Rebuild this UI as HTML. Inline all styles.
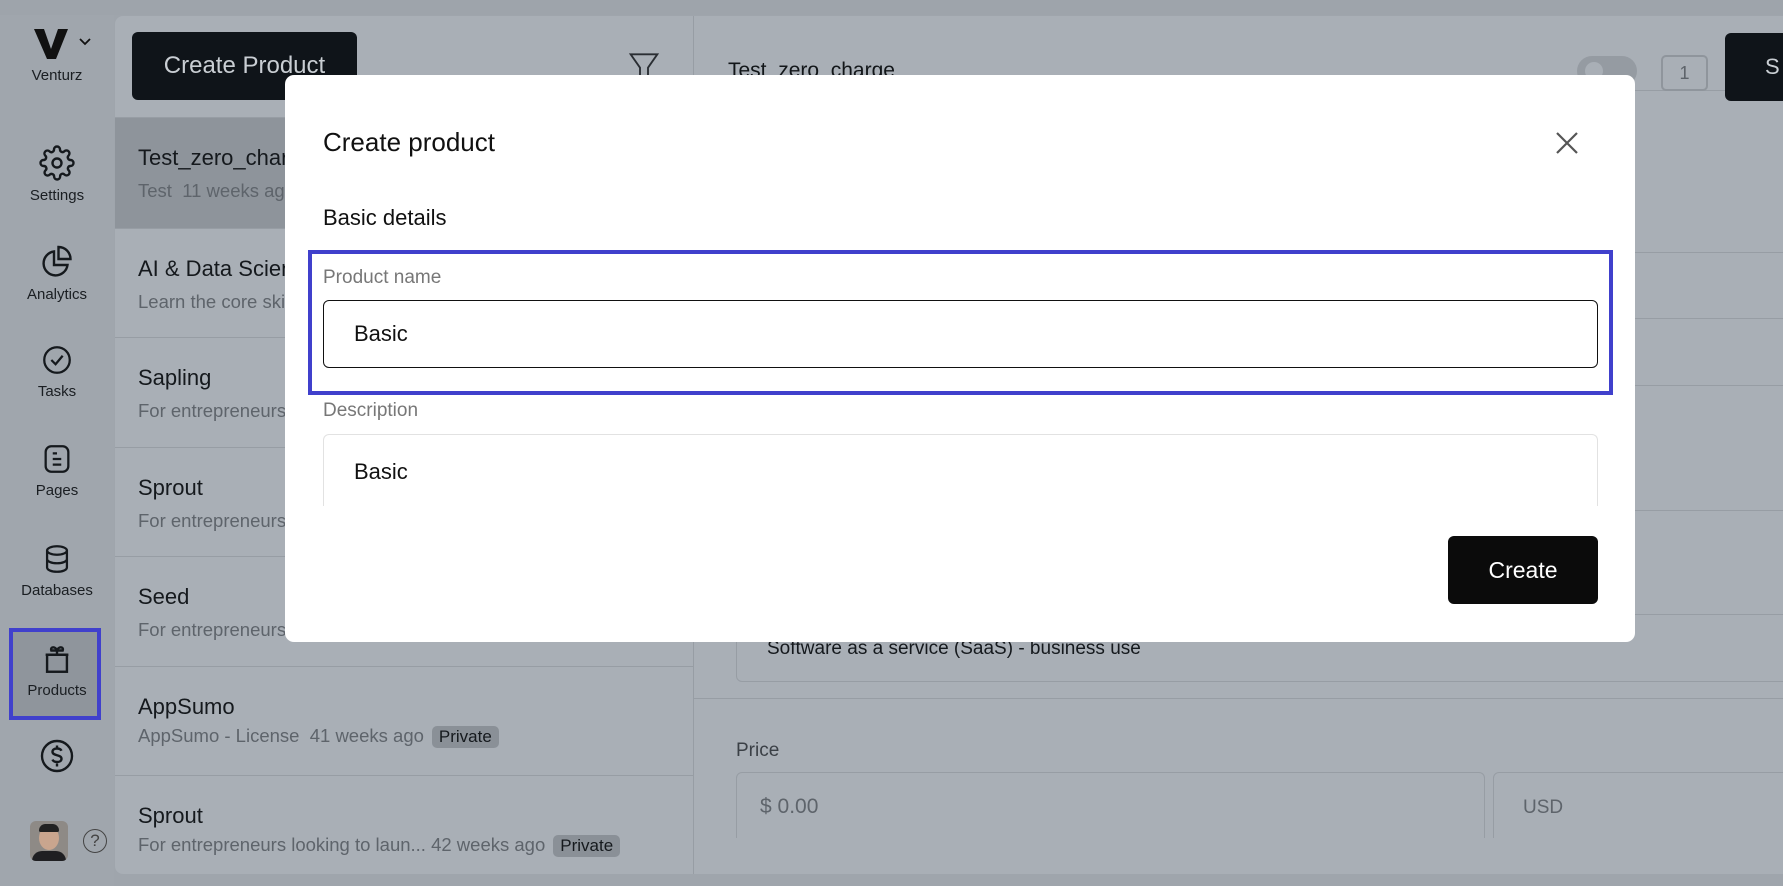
<!DOCTYPE html>
<html><head><meta charset="utf-8"><style>
*{box-sizing:border-box;margin:0;padding:0}
body{width:1783px;height:886px;overflow:hidden;background:#9fa5ac;font-family:"Liberation Sans",sans-serif;color:#121619;position:relative}
.abs{position:absolute}
.side{left:0;top:0;width:114px;height:886px;background:#a0a6ad}
.nav{position:absolute;left:0;width:114px;text-align:center;font-size:15px;color:#1a1e22}
.nav svg{display:block;margin:0 auto 6px}
.list{left:115px;top:16px;width:578px;height:858px;background:#a9afb6;border-radius:8px 0 0 8px}
.item{position:absolute;left:0;width:578px;border-top:1px solid #979da4}
.item .t{position:absolute;left:23px;font-size:22px;color:#15191d}
.item .s{position:absolute;left:23px;font-size:18.5px;color:#5e646b;white-space:nowrap}
.tag{display:inline-block;background:#8a9097;color:#15191d;border-radius:5px;padding:1px 7px;margin-left:8px;font-size:17px}
.right{left:693px;top:16px;width:1090px;height:858px;background:#a9afb6;border-left:1px solid #979da4}
.hl{border-top:1px solid #979da4;position:absolute;left:0;width:1090px}
.modal{left:285px;top:75px;width:1350px;height:567px;background:#fff;border-radius:9px}
</style></head><body>
<div class="abs side"></div>
<div class="abs" style="left:0;top:0;width:1783px;height:15px;background:#9ea4ab"></div>
<svg class="abs" style="left:34px;top:29px" width="34" height="30" viewBox="0 0 34 30"><path d="M0 0h10l7 20 7-20h10L22 30h-9z" fill="#111"/></svg>
<svg class="abs" style="left:79px;top:38px" width="12" height="8" viewBox="0 0 12 8" fill="none" stroke="#111" stroke-width="1.8"><path d="M1 1l5 5 5-5"/></svg>
<div class="nav" style="top:67px">Venturz</div>
<div class="nav" style="top:145px"><svg width="36" height="36" viewBox="0 0 24 24" fill="none" stroke="#15191d" stroke-width="1.6"><circle cx="12" cy="12" r="3"/><path d="M19.4 15a1.65 1.65 0 0 0 .33 1.82l.06.06a2 2 0 1 1-2.83 2.830l-.06-.06a1.65 1.65 0 0 0-2.82 1.17V21a2 2 0 1 1-4 0v-.09A1.65 1.65 0 0 0 9 19.4a1.65 1.650 0 0 0-1.82.33l-.06.06a2 2 0 1 1-2.83-2.83l.06-.06A1.65 1.65 0 0 0 3.17 14H3a2 2 0 1 1 0-4h.09A1.65 1.65 0 0 0 4.6 9a1.65 1.65 0 0 0-.33-1.82l-.06-.06a2 2 0 1 1 2.830-2.83l.06.06A1.65 1.65 0 0 0 9 4.6 1.65 1.65 0 0 0 10 3.09V3a2 2 0 1 1 4 0v.09a1.65 1.65 0 0 0 1 1.51 1.65 1.65 0 0 0 1.82-.33l.06-.06a2 2 0 1 1 2.83 2.83l-.06.06A1.65 1.65 0 0 0 19.4 9a1.65 1.65 0 0 0 1.51 1H21a2 2 0 1 1 0 4h-.09a1.65 1.65 0 0 0-1.51 1z"/></svg>Settings</div>
<div class="nav" style="top:244px"><svg width="36" height="36" viewBox="0 0 24 24" fill="none" stroke="#15191d" stroke-width="1.6"><path d="M10 5a8 8 0 1 0 9 9h-9z"/><path d="M13 2a8 8 0 0 1 8 8h-8z"/></svg>Analytics</div>
<div class="nav" style="top:343px"><svg width="34" height="34" viewBox="0 0 24 24" fill="none" stroke="#15191d" stroke-width="1.6"><circle cx="12" cy="12" r="9"/><path d="M8 12l3 3 5-6"/></svg>Tasks</div>
<div class="nav" style="top:442px"><svg width="34" height="34" viewBox="0 0 24 24" fill="none" stroke="#15191d" stroke-width="1.6"><rect x="4" y="3" width="16" height="18" rx="4"/><path d="M9 8h3M9 12h6M9 16h6"/></svg>Pages</div>
<div class="nav" style="top:542px"><svg width="34" height="34" viewBox="0 0 24 24" fill="none" stroke="#15191d" stroke-width="1.6"><ellipse cx="12" cy="6" rx="7" ry="3"/><path d="M5 6v12c0 1.7 3.1 3 7 3s7-1.3 7-3V6M5 12c0 1.7 3.1 3 7 3s7-1.3 7-3"/></svg>Databases</div>
<div class="abs" style="left:9px;top:628px;width:92px;height:92px;border:4px solid #4040cc;background:#8f959c"></div>
<div class="nav" style="top:642px"><svg width="34" height="34" viewBox="0 0 24 24" fill="none" stroke="#15191d" stroke-width="1.7"><rect x="5" y="9" width="14" height="12"/><path d="M4 9h16M12 9V5M12 6c-1-3-5-3-4 0zM12 6c1-3 5-3 4 0z"/></svg>Products</div>
<div class="nav" style="top:738px"><svg width="36" height="36" viewBox="0 0 24 24" fill="none" stroke="#15191d" stroke-width="1.6"><circle cx="12" cy="12" r="10"/><path d="M15 8.5c-.5-1-1.6-1.5-3-1.5-1.700 0-3 .8-3 2.2 0 3 6 1.6 6 4.6 0 1.4-1.3 2.2-3 2.2-1.4 0-2.6-.6-3-1.6M12 5v2M12 17v2"/></svg></div>
<div class="abs" style="left:30px;top:821px;width:38px;height:40px;background:#8e8a86;border-radius:6px;overflow:hidden"><div class="abs" style="left:9px;top:5px;width:20px;height:24px;background:#c9a58e;border-radius:50%"></div><div class="abs" style="left:9px;top:3px;width:20px;height:8px;background:#222;border-radius:8px 8px 2px 2px"></div><div class="abs" style="left:2px;top:30px;width:34px;height:14px;background:#1f1f22;border-radius:10px 10px 0 0"></div></div>
<div class="abs" style="left:83px;top:829px;width:24px;height:24px;border:1.5px solid #444;border-radius:50%;font-size:17px;text-align:center;line-height:21px;color:#444">?</div>

<div class="abs list">
  <div class="abs" style="left:17px;top:16px;width:225px;height:68px;background:#0f1419;border-radius:6px;color:#c9ced3;font-size:24px;text-align:center;line-height:68px">Create Product</div>
  <svg class="abs" style="left:513px;top:35px" width="32" height="36" viewBox="0 0 24 26" fill="none" stroke="#2a2e33" stroke-width="1.4"><path d="M2 2h20l-7 10v11l-6-3v-8z"/></svg>
  <div class="item" style="top:101px;height:111px;background:#8e949b"><div class="t" style="top:27px">Test_zero_charge</div><div class="s" style="top:62px">Test&nbsp; 11 weeks ago</div></div>
  <div class="item" style="top:212px;height:109px"><div class="t" style="top:27px">AI &amp; Data Science</div><div class="s" style="top:62px">Learn the core skills</div></div>
  <div class="item" style="top:321px;height:110px"><div class="t" style="top:27px">Sapling</div><div class="s" style="top:62px">For entrepreneurs</div></div>
  <div class="item" style="top:431px;height:109px"><div class="t" style="top:27px">Sprout</div><div class="s" style="top:62px">For entrepreneurs</div></div>
  <div class="item" style="top:540px;height:110px"><div class="t" style="top:27px">Seed</div><div class="s" style="top:62px">For entrepreneurs</div></div>
  <div class="item" style="top:650px;height:109px"><div class="t" style="top:27px">AppSumo</div><div class="s" style="top:58px">AppSumo - License&nbsp; 41 weeks ago<span class="tag">Private</span></div></div>
  <div class="item" style="top:759px;height:99px"><div class="t" style="top:27px">Sprout</div><div class="s" style="top:58px">For entrepreneurs looking to laun... 42 weeks ago<span class="tag">Private</span></div></div>
</div>

<div class="abs right">
  <div class="hl" style="top:74px"></div>
  <div class="abs" style="left:34px;top:43px;font-size:21px">Test_zero_charge</div>
  <div class="abs" style="left:883px;top:40px;width:60px;height:30px;background:#959ba2;border-radius:15px"><div class="abs" style="left:8px;top:6px;width:18px;height:18px;background:#a9afb6;border-radius:50%"></div></div>
  <div class="abs" style="left:967px;top:39px;width:47px;height:36px;border:2px solid #8f959c;border-radius:5px;text-align:center;line-height:32px;color:#5d636a;font-size:18px">1</div>
  <div class="abs" style="left:1031px;top:17px;width:70px;height:68px;background:#0f1419;border-radius:6px;color:#c9ced3;font-size:22px;line-height:68px;padding-left:40px">S</div>
  <div class="hl" style="top:236px"></div><div class="hl" style="top:302px"></div><div class="hl" style="top:369px"></div><div class="hl" style="top:494px"></div><div class="hl" style="top:598px"></div>
  <div class="abs" style="left:42px;top:598px;width:1060px;height:68px;border:1px solid #979da4;border-radius:6px"></div>
  <div class="abs" style="left:73px;top:622px;font-size:19px;color:#15191d">Software as a service (SaaS) - business use</div>
  <div class="hl" style="top:682px"></div>
  <div class="abs" style="left:42px;top:724px;font-size:19px;color:#3b4046">Price</div>
  <div class="abs" style="left:42px;top:756px;width:749px;height:66px;border:1px solid #979da4;border-bottom:none;border-radius:6px 6px 0 0"></div>
  <div class="abs" style="left:66px;top:779px;font-size:21px;color:#5e646b">$ 0.00</div>
  <div class="abs" style="left:799px;top:756px;width:300px;height:66px;border:1px solid #979da4;border-bottom:none;border-radius:6px 6px 0 0"></div>
  <div class="abs" style="left:829px;top:781px;font-size:19px;color:#5e646b">USD</div>
</div>

<div class="abs modal">
  <div class="abs" style="left:38px;top:52px;font-size:26px;color:#111">Create product</div>
  <svg class="abs" style="left:1270px;top:56px" width="24" height="24" viewBox="0 0 24 24" stroke="#555" stroke-width="2.2"><path d="M2 2l20 20M22 2L2 22"/></svg>
  <div class="abs" style="left:38px;top:130px;font-size:22px;color:#111">Basic details</div>
  <div class="abs" style="left:23px;top:175px;width:1305px;height:145px;border:4px solid #4040cc"></div>
  <div class="abs" style="left:38px;top:192px;font-size:19px;color:#777">Product name</div>
  <div class="abs" style="left:38px;top:225px;width:1275px;height:68px;border:1px solid #111;border-radius:6px"></div>
  <div class="abs" style="left:69px;top:246px;font-size:22px;color:#111">Basic</div>
  <div class="abs" style="left:38px;top:325px;font-size:19px;color:#777">Description</div>
  <div class="abs" style="left:38px;top:359px;width:1275px;height:72px;border:1px solid #e2e2e2;border-bottom:none;border-radius:6px 6px 0 0"></div>
  <div class="abs" style="left:69px;top:384px;font-size:22px;color:#111">Basic</div>
  <div class="abs" style="left:1163px;top:461px;width:150px;height:68px;background:#0b0b0b;border-radius:6px;color:#fff;font-size:23px;text-align:center;line-height:68px">Create</div>
</div>
</body></html>
